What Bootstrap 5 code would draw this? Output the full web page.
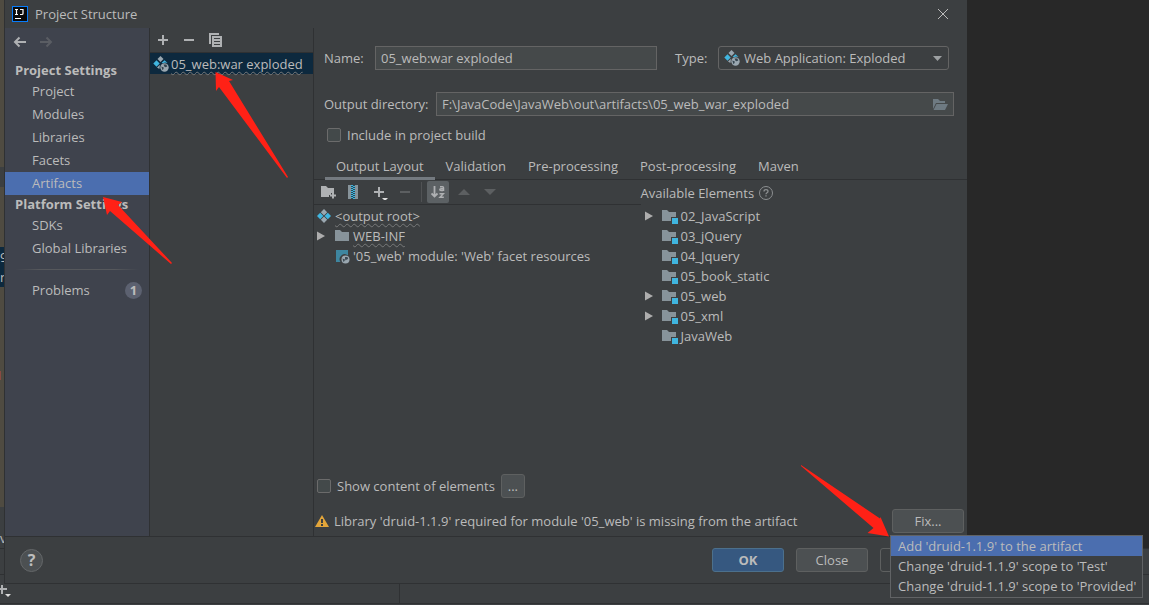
<!DOCTYPE html>
<html lang="en" data-bs-theme="dark">
<head>
<meta charset="utf-8">
<meta name="viewport" content="width=device-width, initial-scale=1">
<title>Project Structure</title>
<link rel="stylesheet" href="https://cdn.jsdelivr.net/npm/bootstrap@5.3.0/dist/css/bootstrap.min.css">
<style>
  :root { --panel:#3c3f41; --line:#2f3133; --fg:#bbbbbb; --sel:#4b6eaf; --field:#45494a; --edge:#646464; }
  body { font-family:"Open Sans","Noto Sans",sans-serif; font-size:13px; line-height:20px; color:var(--fg); background:#282828; overflow:hidden; }
  svg { display:block; flex:none; }
  a { color:inherit; text-decoration:none; }
  .ide { min-height:100vh; }
  .gutter-strip { width:5px; background:#4f4b41; overflow:hidden; }
  .gutter-strip .hl { height:20px; }
  .gutter-strip .plain { background:var(--panel); }
  .navy { background:#0d293e; }
  .ide-bottom { background:var(--panel); height:57px; }
  .ide-bar { border-top:1px solid var(--line); }
  .dialog { left:4px; right:182px; top:0; bottom:21px; background:var(--panel); border-left:1px solid var(--line); border-bottom:1px solid var(--line); }
  .title-bar { height:28px; padding:0 18px 0 7px; gap:7px; }
  .side-panel { width:145px; background:#3f434d; border-right:1px solid var(--line); }
  .side-panel h2 { font-size:13px; line-height:19px; font-weight:700; color:var(--fg); margin:0; padding-left:10px; white-space:nowrap; }
  .side-nav { height:33px; padding:0 8px; gap:12px; }
  .side-item { display:flex; align-items:center; justify-content:space-between; height:23px; padding:0 7px 1px 27px; white-space:nowrap; }
  .side-item.active { background:var(--sel); }
  .side-rule { height:1px; margin:9px 10px; background:linear-gradient(90deg,transparent,#56585c 20%,#56585c 80%,transparent); }
  .count { width:17px; height:17px; border-radius:50%; background:#5c6170; font-size:13px; line-height:17px; text-align:center; font-weight:700; }
  .artifact-list { width:164px; border-right:1px solid var(--line); }
  .list-tools { height:25px; padding:0 7px; gap:15px; border-bottom:1px solid var(--line); }
  .artifact { height:21px; padding-left:3px; gap:2px; }
  .tool { background:none; border:0; padding:0; color:#afb1b3; display:flex; }
  .wavy { text-decoration:underline wavy #77797a 1px; text-underline-offset:2px; text-decoration-skip-ink:none; }
  .field { height:24px; background:var(--field); border:1px solid var(--edge); border-radius:0; color:var(--fg); font-size:13px; line-height:20px; padding:0 5px; width:100%; min-width:0; }
  .combo { appearance:none; border-radius:3px; background:var(--panel); padding:0 25px; }
  .over { top:4px; pointer-events:none; }
  .form-area { padding:18px 13px 0 10px; }
  .tick { appearance:none; width:14px; height:14px; background:#43494a; border:1px solid #6b6b6b; border-radius:2px; margin:0; }
  .tabs { height:24px; padding-left:11px; border-bottom:1px solid var(--line); margin-top:11px; }
  .tabs button { background:none; border:0; color:var(--fg); padding:0 11px 2px; height:24px; line-height:18px; font-size:13px; border-bottom:3px solid transparent; white-space:nowrap; }
  .tabs button.active { border-bottom-color:#747a80; }
  .layout-tools { height:25px; border-bottom:1px solid var(--line); padding-left:6px; }
  .sorted { width:22px; height:22px; background:#5c6164; border-radius:2px; align-items:center; justify-content:center; }
  .tree { list-style:none; margin:0; padding:1px 0 0; }
  .tree li { height:20px; display:flex; align-items:center; gap:3px; white-space:nowrap; }
  .twist { width:8px; margin-right:6px; }
  .btn-ide { width:72px; height:24px; padding:0; font-size:13px; line-height:20px; color:var(--fg); background:#4c5052; border:1px solid #5e6060; border-radius:3px; }
  .btn-ide.primary { background:#365880; border-color:#4c708c; font-weight:700; }
  .btn-ide.dots { width:24px; }
  .fix-menu { top:26px; left:-2px; min-width:0; width:253px; padding:0 0 1px; background:var(--panel); border:1px solid #616365; border-radius:0; font-size:13px; --bs-dropdown-item-padding-x:7px; --bs-dropdown-item-padding-y:0; z-index:10; }
  .fix-menu .dropdown-item { color:var(--fg); line-height:20px; height:20px; }
  .fix-menu .dropdown-item.active { background:var(--sel); }
  .foot { height:47px; border-top:1px solid var(--line); padding:0 15px; }
  .help { width:23px; height:23px; border-radius:50%; border:1px solid #646769; background:#4c5052; color:#bdbdbd; font-size:16px; font-weight:700; line-height:20px; padding:0; }
  .pointer { fill:#ff2116; pointer-events:none; z-index:20; }
</style>
</head>
<body>
<svg width="0" height="0" class="position-absolute">
  <defs>
    <symbol id="artifact" viewBox="0 0 16 16">
      <path fill="#9aa7b0" d="M7.500 0l3 3-3 3-3-3z"/><path fill="#40b6e0" d="M3.500 4.300l3.200 3.200-3.200 3.200L.3 7.500zM11.500 4.300l3 2.700-2.500-.5-2.500.8-.8-.5z"/><path fill="#9aa7b0" d="M7 8.800L6.400 13 4 11.500z"/>
      <circle cx="11.500" cy="11.500" r="4.200" fill="#9aa7b0"/><path fill="#34444f" d="M8.300 10.500l2.500 1-.3 1.500-1 1.200zM10.500 8.600l2.800-.1 1 2-1.800.8-1-.5z"/>
    </symbol>
    <symbol id="root" viewBox="0 0 16 16">
      <path fill="#9aa7b0" d="M8 1l3.200 3.200L8 7.400 4.800 4.200zM8 8.600l3.200 3.200L8 15l-3.200-3.200z"/><path fill="#40b6e0" d="M4.200 4.800L7.400 8l-3.200 3.200L1 8zM11.800 4.800L15 8l-3.200 3.200L8.600 8z"/>
    </symbol>
    <symbol id="folder" viewBox="0 0 16 16"><path fill="#87939a" d="M1 2h5l2 2h7v9H1z"/></symbol>
    <symbol id="module" viewBox="0 0 16 16"><path fill="#87939a" d="M0 2h5l2 2h7v5H9v4H0z"/><path fill="#40b6e0" d="M10 10h6v6h-6z"/></symbol>
    <symbol id="web" viewBox="0 0 16 16"><path fill="#3e86a0" d="M2 2h12v5.500A5 5 0 0 0 6.500 14H2z"/><circle cx="11.500" cy="11.500" r="4" fill="#9aa7b0"/><path fill="#3c4a54" d="M8.500 10.500l2.500 1-.5 1.500-1 1zM11 9l2.500 0 .7 2-1.500.5-1 1-.7-1.500z"/></symbol>
    <symbol id="twist" viewBox="0 0 8 10"><path fill="#adadad" d="M0 .5L8 5 0 9.500z"/></symbol>
  </defs>
</svg>

<div class="ide d-flex flex-column position-relative">
  <div class="flex-grow-1 d-flex">
    <div class="gutter-strip d-flex flex-column">
      <div style="height:167px"></div>
      <div class="hl plain"></div>
      <div style="height:60px"></div>
      <div class="hl navy">9</div>
      <div class="hl navy">n</div>
      <div style="height:84px"></div>
      <div style="height:9px;width:1px;background:#8a4a42"></div>
      <div class="flex-grow-1"></div>
      <div class="plain" style="height:21px"></div>
      <div class="hl plain">v</div>
    </div>
  </div>
  <div class="ide-bottom d-flex flex-column">
    <div class="ide-bar" style="height:26px"></div>
    <div class="ide-bar d-flex flex-grow-1 align-items-center">
      <svg width="12" height="16" viewBox="0 0 12 16"><path stroke="#afb1b3" stroke-width="2" d="M0 8h7M2 4v9"/><path fill="#ddd" d="M5 13h6l-3 3z"/></svg>
      <div class="h-100" style="width:388px;border-right:1px solid var(--line)"></div>
    </div>
    <div class="ide-bar" style="height:2px"></div>
  </div>

  <div class="dialog position-absolute d-flex flex-column">
    <header class="title-bar d-flex align-items-center">
      <svg width="16" height="16" viewBox="0 0 16 16"><rect x=".5" y=".5" width="15" height="15" fill="#0a0a0a" stroke="#087cfa"/><path fill="none" stroke="#fff" stroke-width="1.200" d="M3 3.500h3M4.500 3.500v5M3 8.500h3M8 3.500h3v4q0 1-1 1H8M3 12.500h6"/></svg>
      <span>Project Structure</span>
      <button class="tool ms-auto" aria-label="Close"><svg width="12" height="12" viewBox="0 0 12 12"><path stroke="#bbb" d="M1 1l10 10M11 1L1 11"/></svg></button>
    </header>

    <div class="d-flex flex-grow-1 position-relative">
      <nav class="side-panel flex-shrink-0">
        <div class="side-nav d-flex pt-2">
          <button class="tool" aria-label="Back"><svg width="14" height="12" viewBox="0 0 14 12"><path fill="none" stroke="#afb1b3" stroke-width="2" d="M13 6H2M6.500 1.500L2 6l4.500 4.500"/></svg></button>
          <button class="tool" aria-label="Forward"><svg width="14" height="12" viewBox="0 0 14 12"><path fill="none" stroke="#5a5d63" stroke-width="2" d="M1 6h11M7.500 1.500L12 6l-4.500 4.500"/></svg></button>
        </div>
        <h2>Project Settings</h2>
        <a href="#" class="side-item">Project</a>
        <a href="#" class="side-item">Modules</a>
        <a href="#" class="side-item">Libraries</a>
        <a href="#" class="side-item">Facets</a>
        <a href="#" class="side-item active">Artifacts</a>
        <h2>Platform Settings</h2>
        <a href="#" class="side-item">SDKs</a>
        <a href="#" class="side-item">Global Libraries</a>
        <div class="side-rule"></div>
        <a href="#" class="side-item">Problems <span class="count">1</span></a>
      </nav>

      <section class="artifact-list flex-shrink-0">
        <div class="list-tools d-flex align-items-center">
          <button class="tool" aria-label="Add"><svg width="12" height="12" viewBox="0 0 12 12"><path stroke="currentColor" stroke-width="2" d="M1 6h10M6 1v10"/></svg></button>
          <button class="tool" aria-label="Remove"><svg width="10" height="12" viewBox="0 0 10 12"><path stroke="currentColor" stroke-width="2" d="M0 6h10"/></svg></button>
          <button class="tool" aria-label="Copy"><svg width="13" height="14" viewBox="0 0 13 14"><path fill="currentColor" d="M0 0h10v2H2v9H0z"/><path fill="currentColor" fill-rule="evenodd" d="M3 3h10v11H3zm2 2v1h6V5zm0 3v1h6V8zm0 3v1h6v-1z"/></svg></button>
        </div>
        <div class="artifact navy d-flex align-items-center">
          <svg width="16" height="16"><use href="#artifact"/></svg><span class="wavy text-nowrap">05_web:war exploded</span>
        </div>
      </section>

      <main class="flex-grow-1 d-flex flex-column" style="min-width:0">
        <div class="form-area">
          <div class="d-flex align-items-center" style="padding-right:5px">
            <label for="name" style="width:51px">Name:</label>
            <input id="name" class="field flex-grow-1" style="width:0" value="05_web:war exploded">
            <label for="type" style="width:43px;margin-left:18px">Type:</label>
            <div class="position-relative" style="width:231px">
              <select id="type" class="field combo"><option>Web Application: Exploded</option></select>
              <svg class="over position-absolute" style="left:6px" width="16" height="16"><use href="#artifact"/></svg>
              <svg class="over position-absolute" style="right:7px" width="9" height="16" viewBox="0 0 9 16"><path fill="#9da0a2" d="M0 6h9l-4.500 5z"/></svg>
            </div>
          </div>
          <div class="d-flex align-items-center" style="margin-top:22px">
            <label for="dir" class="text-nowrap" style="width:112px">Output directory:</label>
            <div class="position-relative flex-grow-1">
              <input id="dir" class="field d-block" value="F:\JavaCode\JavaWeb\out\artifacts\05_web_war_exploded">
              <svg class="over position-absolute" style="right:6px" width="16" height="16" viewBox="0 0 16 16"><path fill="#6e7a82" d="M1 3h5l2 2h5v2H4l-3 6z"/><path fill="#6e7a82" d="M4.500 8H16l-3 6H1.500z"/></svg>
            </div>
          </div>
          <div class="d-flex align-items-center" style="margin-top:9px;padding-left:3px;gap:6px">
            <input type="checkbox" id="inc" class="tick"><label for="inc">Include in project build</label>
          </div>
        </div>

        <div class="tabs d-flex" role="tablist">
          <button class="active" role="tab">Output Layout</button>
          <button role="tab">Validation</button>
          <button role="tab">Pre-processing</button>
          <button role="tab">Post-processing</button>
          <button role="tab">Maven</button>
        </div>

        <div class="d-flex flex-grow-1">
          <div class="w-50">
            <div class="layout-tools d-flex align-items-center">
              <button class="tool" aria-label="Create directory"><svg width="16" height="16" viewBox="0 0 16 16"><path fill="currentColor" d="M1 2h5l2 2h6v5h-3v2H9v2H1z"/><path stroke="currentColor" stroke-width="2" d="M10 11.500h6M13 8.500v6"/></svg></button>
              <button class="tool" style="margin-left:11px" aria-label="Create archive"><svg width="12" height="16" viewBox="0 0 12 16"><path fill="#87939a" d="M1 1h10v14H1z"/><path fill="#2b4a58" d="M4 1h4v14H4z"/><path stroke="#40b6e0" stroke-width="2" stroke-dasharray="1 1" d="M5 1v14M7 2v13"/></svg></button>
              <button class="tool" style="margin-left:14px" aria-label="Add copy of"><svg width="15" height="16" viewBox="0 0 15 16"><path stroke="currentColor" stroke-width="2" d="M1 8h10M6 3v10"/><path fill="#ddd" d="M9 14h6l-3 3z"/></svg></button>
              <button class="tool" style="margin-left:12px" aria-label="Remove" disabled><svg width="10" height="16" viewBox="0 0 10 16"><path stroke="#5c5f61" stroke-width="2" d="M0 8h10"/></svg></button>
              <div style="width:1px;height:20px;background:#505254;margin:0 5px 0 11px"></div>
              <button class="tool sorted" aria-label="Sort"><svg width="14" height="16" viewBox="0 0 14 16"><path fill="none" stroke="currentColor" stroke-width="1.800" d="M3.500 2v10M.5 9.500l3 3 3-3"/><path fill="none" stroke="currentColor" stroke-width="1.500" d="M9 2.700h2.500q1 0 1 1V7M12 4.700h-2q-1.200 0-1.200.9t1.200.9h2M8.500 9.700h3.800l-3.300 3.600h3.800"/></svg></button>
              <button class="tool" style="margin-left:9px" aria-label="Up" disabled><svg width="12" height="6" viewBox="0 0 12 6"><path fill="#5c5f61" d="M0 6h12L6 0z"/></svg></button>
              <button class="tool" style="margin-left:14px" aria-label="Down" disabled><svg width="12" height="6" viewBox="0 0 12 6"><path fill="#5c5f61" d="M0 0h12L6 6z"/></svg></button>
            </div>
            <ul class="tree">
              <li style="padding-left:2px"><svg width="16" height="16"><use href="#root"/></svg><span class="wavy">&lt;output root&gt;</span></li>
              <li style="padding-left:3px"><svg class="twist" height="10"><use href="#twist"/></svg><svg width="16" height="16"><use href="#folder"/></svg><span class="wavy">WEB-INF</span></li>
              <li style="padding-left:20px"><svg width="16" height="16"><use href="#web"/></svg>'05_web' module: 'Web' facet resources</li>
            </ul>
          </div>
          <div class="w-50">
            <div class="d-flex align-items-center" style="height:25px;gap:4px">Available Elements
              <svg width="16" height="16" viewBox="0 0 16 16"><circle cx="8" cy="8" r="6.500" fill="none" stroke="#8c8f91"/><path fill="none" stroke="#8c8f91" stroke-width="1.300" d="M6 6.500Q6 4.700 8 4.700T10 6.300Q10 7.200 9 7.800T8 9.300M8 10.300v1.300"/></svg>
            </div>
            <ul class="tree" id="available"></ul>
          </div>
        </div>

        <div class="d-flex align-items-center" style="padding-left:3px;height:24px;gap:6px">
          <input type="checkbox" id="show" class="tick"><label for="show">Show content of elements</label>
          <button class="btn-ide dots">...</button>
        </div>
        <div class="d-flex align-items-center" style="padding:11px 3px 3px 0;gap:4px">
          <svg width="16" height="16" viewBox="0 0 16 16"><path fill="#e2a53a" d="M8 2l7 12H1z"/><path fill="#3c3f41" d="M7 6h2v4H7zM7 11h2v2H7z"/></svg>
          <span class="text-nowrap">Library 'druid-1.1.9' required for module '05_web' is missing from the artifact</span>
          <div class="ms-auto position-relative">
            <button class="btn-ide d-block" aria-expanded="true">Fix...</button>
            <div class="dropdown-menu show fix-menu">
              <a class="dropdown-item active" href="#">Add 'druid-1.1.9' to the artifact</a>
              <a class="dropdown-item" href="#">Change 'druid-1.1.9' scope to 'Test'</a>
              <a class="dropdown-item" href="#">Change 'druid-1.1.9' scope to 'Provided'</a>
            </div>
            <svg class="pointer position-absolute" style="right:73px;bottom:-5px" width="92" height="74" viewBox="799 464 92 74"><path d="M801 465L880 518.500 880.500 517 889 536.500 867.500 533 873.500 528 801 466z"/></svg>
          </div>
        </div>
      </main>
      <svg class="pointer position-absolute" style="left:208px;top:42px" width="78" height="110" viewBox="213 70 78 110"><path d="M215.500 72L233 80 229 81 288 177 287 178 219 87 216 91z"/></svg>
      <svg class="pointer position-absolute" style="left:97px;top:168px" width="72" height="70" viewBox="102 196 72 70"><path d="M103 197L122 202 118 205 172 263 171 264 110 211 107 215z"/></svg>
    </div>

    <footer class="foot d-flex align-items-center">
      <button class="help">?</button>
      <div class="ms-auto d-flex" style="gap:12px">
        <button class="btn-ide primary">OK</button>
        <button class="btn-ide">Close</button>
        <button class="btn-ide" style="background:transparent" aria-label="Apply" disabled></button>
      </div>
    </footer>
  </div>
</div>
<script src="https://cdn.jsdelivr.net/npm/bootstrap@5.3.0/dist/js/bootstrap.bundle.min.js"></script>
<script>
  const modules = [["02_JavaScript",1],["03_jQuery",0],["04_Jquery",0],["05_book_static",0],["05_web",1],["05_xml",1],["JavaWeb",0]];
  document.getElementById("available").innerHTML = modules.map(([name, open]) =>
    `<li class="ps-1"><svg class="twist" height="10">${open ? '<use href="#twist"/>' : ''}</svg><svg width="16" height="16"><use href="#module"/></svg>${name}</li>`).join("");
</script>
</body>
</html>
